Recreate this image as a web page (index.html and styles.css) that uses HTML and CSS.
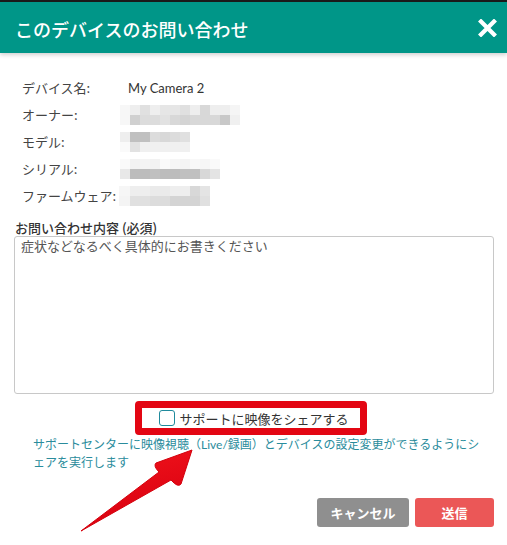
FILE: index.html
```html
<!DOCTYPE html>
<html lang="ja">
<head>
<meta charset="utf-8">
<link rel="stylesheet" href="styles.css">
</head>
<body>
<div class="dialog">
  <div class="topbar"></div>
  <header class="header">
    <h1 class="title">このデバイスのお問い合わせ</h1>
    <svg class="close" width="19" height="18" viewBox="0 0 19 18" aria-hidden="true">
      <path d="M3 2.5 L16 15.5 M16 2.5 L3 15.5" stroke="#fff" stroke-width="4.2" stroke-linecap="square"/>
    </svg>
  </header>
  <main class="body">
    <div class="info">
      <div class="label">デバイス名:</div><div class="value">My Camera 2</div>
      <div class="label">オーナー:</div><div class="value"><span class="mosaic mosaic-owner"></span></div>
      <div class="label">モデル:</div><div class="value"><span class="mosaic mosaic-model"></span></div>
      <div class="label">シリアル:</div><div class="value"><span class="mosaic mosaic-serial"></span></div>
      <div class="label">ファームウェア:</div><div class="value"><span class="mosaic mosaic-firm"></span></div>
    </div>
    <div class="field-label">お問い合わせ内容 (必須)</div>
    <textarea class="message" placeholder="症状などなるべく具体的にお書きください"></textarea>
    <div class="share-row">
      <label class="share-box">
        <span class="checkbox"></span>
        <span class="share-text">サポートに映像をシェアする</span>
      </label>
    </div>
    <p class="note">サポートセンターに映像視聴（Live/録画）とデバイスの設定変更ができるようにシェアを実行します</p>
    <div class="actions">
      <button class="btn btn-cancel">キャンセル</button>
      <button class="btn btn-send">送信</button>
    </div>
  </main>
  <svg class="arrow" width="507" height="545" viewBox="0 0 507 545" aria-hidden="true">
    <defs>
      <linearGradient id="ag" x1="0" y1="0" x2="0.3" y2="1">
        <stop offset="0" stop-color="#f2141c"/>
        <stop offset="1" stop-color="#d80010"/>
      </linearGradient>
    </defs>
    <path d="M81 531 L159 472 Q153 466 156 463 L192 450 L181 484 Q178 488 171 480 Z" fill="url(#ag)" stroke="#d4000c" stroke-width="1" stroke-linejoin="round"/>
  </svg>
</div>
</body>
</html>
```
FILE: styles.css
```css
* { box-sizing: border-box; }
html, body { margin: 0; padding: 0; background: #fff; }
body {
  width: 507px;
  height: 545px;
  overflow: hidden;
  font-family: Lato, "Noto Sans CJK JP", sans-serif;
  color: #444;
}
.dialog { position: relative; width: 507px; height: 545px; background: #fff; }
.topbar { height: 2px; background: #1b1b1b; }
.header {
  height: 51px;
  background: #009688;
  display: flex;
  align-items: center;
  justify-content: space-between;
  padding: 3px 10px 0 15px;
  box-shadow: 0 2px 4px rgba(0,0,0,0.18);
  position: relative;
  z-index: 1;
}
.title {
  margin: 0;
  font-family: "Noto Sans CJK JP", sans-serif;
  font-size: 18px;
  font-weight: 500;
  color: #fff;
  letter-spacing: 0;
}
.close { display: block; margin-top: -2px; }
.body { padding: 21px 13px 0 15px; }
.info {
  display: grid;
  grid-template-columns: 106px 1fr;
  grid-auto-rows: 27px;
  align-items: center;
  padding-left: 7px;
  font-size: 13px;
}
.label { font-family: "Noto Sans CJK JP", sans-serif; color: #444; white-space: nowrap; }
.value { font-family: Lato, sans-serif; color: #333; font-size: 13px; display: flex; align-items: center; }
.mosaic { display: block; height: 20px; margin-left: -8px; }
.mosaic-owner {
  width: 120px;
  background:
    linear-gradient(to right, #f7f7f7 0 10px, #eeeeee 10px 20px, #e0e0e0 20px 30px, #eeeeee 30px 40px, #e6e6e6 40px 60px, #e0e0e0 60px 70px, #eeeeee 70px 80px, #d8d8d8 80px 90px, #eeeeee 90px 110px, #f5f5f5 110px 120px) top / 100% 10px no-repeat,
    linear-gradient(to right, #f7f7f7 0 10px, #d0d0d0 10px 20px, #dcdcdc 20px 40px, #e2e2e2 40px 50px, #d8d8d8 50px 60px, #d4d4d4 60px 70px, #d8d8d8 70px 100px, #c8c8c8 100px 110px, #f0f0f0 110px 120px) bottom / 100% 10px no-repeat;
}
.mosaic-model {
  width: 70px;
  background:
    linear-gradient(to right, #eeeeee 0 10px, #c0c0c0 10px 30px, #dcdcdc 30px 40px, #d8d8d8 40px 50px, #dcdcdc 50px 60px, #e0e0e0 60px 70px) top / 100% 10px no-repeat,
    linear-gradient(to right, #fafafa 0 10px, #e2e2e2 10px 20px, #f0f0f0 20px 70px) bottom / 100% 10px no-repeat;
}
.mosaic-serial {
  width: 100px;
  background:
    linear-gradient(to right, #fafafa 0 10px, #f2f2f2 10px 20px, #f4f4f4 20px 30px, #f2f2f2 30px 40px, #fafafa 40px 50px, #f6f6f6 50px 60px, #f4f4f4 60px 70px, #f8f8f8 70px 80px, #f6f6f6 80px 90px, #fafafa 90px 100px) top / 100% 10px no-repeat,
    linear-gradient(to right, #e8e8e8 0 10px, #bcbcbc 10px 30px, #c0c0c0 30px 40px, #bcbcbc 40px 60px, #c0c0c0 60px 80px, #d8d8d8 80px 90px, #e4e4e4 90px 100px) bottom / 100% 10px no-repeat;
}
.mosaic-firm {
  width: 91px;
  margin-left: -9px;
  background:
    linear-gradient(to right, #f6f6f6 0 11px, #eeeeee 11px 31px, #eaeaea 31px 51px, #eeeeee 51px 71px, #d8d8d8 71px 81px, #e4e4e4 81px 91px) top / 100% 10px no-repeat,
    linear-gradient(to right, #f4f4f4 0 11px, #e0e0e0 11px 31px, #dcdcdc 31px 51px, #d4d4d4 51px 81px, #e0e0e0 81px 91px) bottom / 100% 10px no-repeat;
}
.field-label {
  margin-top: 10px;
  height: 17px;
  line-height: 17px;
  font-size: 13px;
  font-weight: 500;
  color: #333;
  font-family: "Noto Sans CJK JP", sans-serif;
}
.message {
  display: block;
  width: 480px;
  height: 158px;
  margin: 0 0 0 -1px;
  padding: 1px 6px;
  border: 1px solid #c8c8c8;
  border-radius: 3px;
  resize: none;
  font-family: "Noto Sans CJK JP", sans-serif;
  font-size: 13px;
  line-height: 15px;
  background: #fff;
  outline: none;
}
.message::placeholder { color: #555; opacity: 1; }
.share-row {
  display: flex;
  justify-content: center;
  margin-top: 7px;
  padding-right: 8px;
}
.share-box {
  width: 232px;
  height: 34px;
  border: 7px solid #e30613;
  border-radius: 4px;
  display: flex;
  align-items: center;
  padding-left: 17px;
}
.checkbox {
  width: 16px;
  height: 16px;
  border: 1.5px solid #1f8a9c;
  border-radius: 3px;
  background: #fff;
  flex: none;
}
.share-text {
  margin-left: 5px;
  font-family: "Noto Sans CJK JP", sans-serif;
  font-size: 13px;
  color: #333;
}
.note {
  margin: 1px 0 0;
  padding: 0 12px 0 18px;
  font-family: Lato, "Noto Sans CJK JP", sans-serif;
  font-size: 12px;
  line-height: 18px;
  color: #2a8c9c;
}
.actions {
  display: flex;
  justify-content: flex-end;
  gap: 6px;
  margin-top: 26px;
}
.btn {
  height: 29px;
  border: none;
  border-radius: 3px;
  color: #fff;
  font-family: "Noto Sans CJK JP", sans-serif;
  font-size: 13px;
  font-weight: 700;
  padding: 0;
}
.btn-cancel { width: 92px; background: #8f8f8f; }
.btn-send { width: 79px; background: #eb5757; }
.arrow { position: absolute; left: 0; top: 0; pointer-events: none; }
```
